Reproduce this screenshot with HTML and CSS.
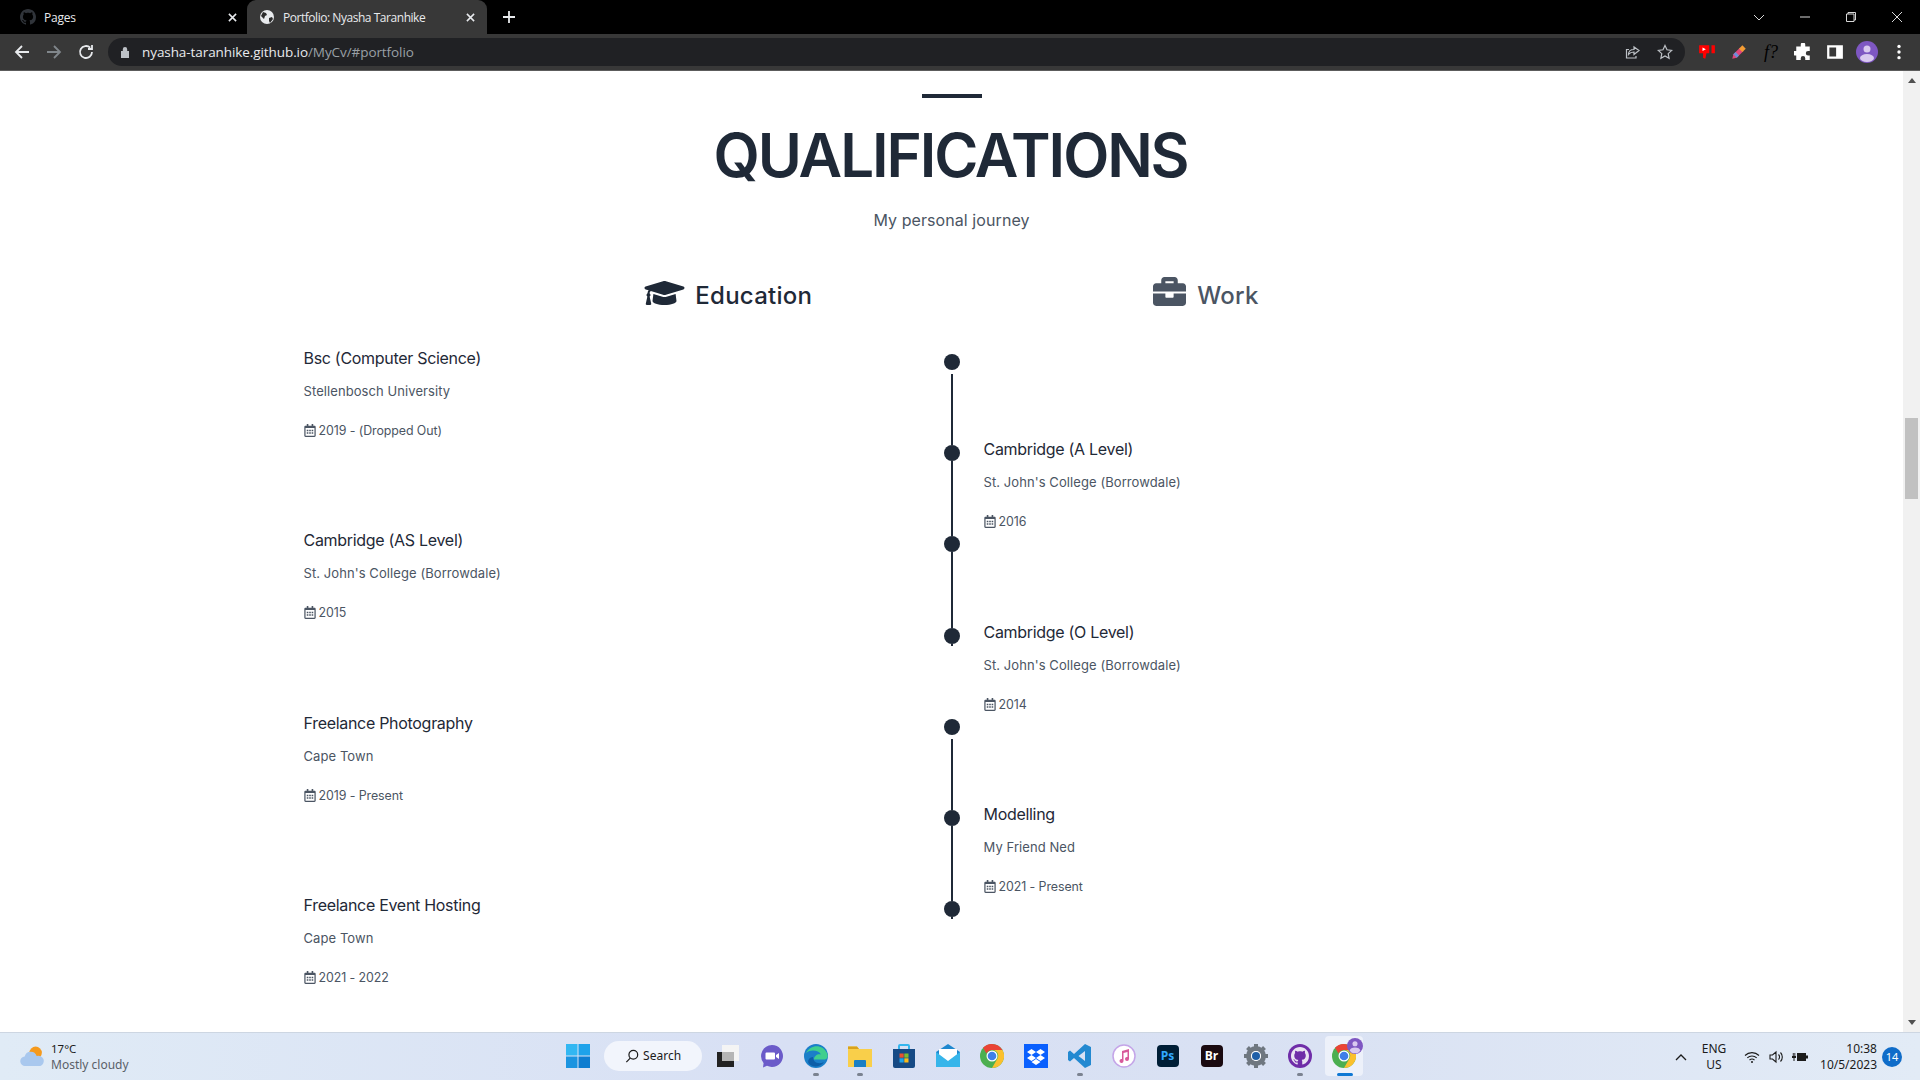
FILE: index.html
```html
<!DOCTYPE html>
<html lang="en">
<head>
<meta charset="utf-8">
<title>Portfolio: Nyasha Taranhike</title>
<link rel="stylesheet" href="styles.css">
</head>
<body>
<svg class="defs" width="0" height="0">
  <symbol id="cal" viewBox="0 0 448 512"><path d="M148 288h-40c-6.600 0-12-5.400-12-12v-40c0-6.600 5.400-12 12-12h40c6.600 0 12 5.400 12 12v40c0 6.600-5.400 12-12 12zm108-12v-40c0-6.600-5.400-12-12-12h-40c-6.600 0-12 5.400-12 12v40c0 6.600 5.400 12 12 12h40c6.600 0 12-5.400 12-12zm96 0v-40c0-6.600-5.400-12-12-12h-40c-6.600 0-12 5.400-12 12v40c0 6.600 5.400 12 12 12h40c6.600 0 12-5.400 12-12zm-96 96v-40c0-6.600-5.400-12-12-12h-40c-6.600 0-12 5.400-12 12v40c0 6.600 5.400 12 12 12h40c6.600 0 12-5.400 12-12zm-96 0v-40c0-6.600-5.400-12-12-12h-40c-6.600 0-12 5.400-12 12v40c0 6.600 5.400 12 12 12h40c6.600 0 12-5.400 12-12zm192 0v-40c0-6.600-5.400-12-12-12h-40c-6.600 0-12 5.400-12 12v40c0 6.600 5.400 12 12 12h40c6.600 0 12-5.400 12-12zm96-260v352c0 26.500-21.500 48-48 48H48c-26.500 0-48-21.500-48-48V112c0-26.500 21.500-48 48-48h48V12c0-6.600 5.400-12 12-12h40c6.600 0 12 5.400 12 12v52h128V12c0-6.600 5.400-12 12-12h40c6.600 0 12 5.400 12 12v52h48c26.500 0 48 21.500 48 48zm-48 346V160H48v298c0 3.300 2.700 6 6 6h340c3.300 0 6-2.700 6-6z"/></symbol>
  <symbol id="gh" viewBox="0 0 16 16"><path d="M8 0C3.580 0 0 3.580 0 8c0 3.540 2.290 6.530 5.470 7.590.4.070.55-.17.55-.38 0-.19-.01-.82-.01-1.490-2.010.37-2.530-.49-2.690-.94-.09-.23-.48-.94-.82-1.130-.28-.15-.68-.52-.01-.53.63-.01 1.080.58 1.230.82.72 1.210 1.870.87 2.330.66.07-.52.28-.87.51-1.070-1.780-.2-3.640-.89-3.640-3.950 0-.87.31-1.590.82-2.150-.08-.2-.36-1.020.08-2.120 0 0 .67-.21 2.200.82.64-.18 1.320-.27 2-.27.68 0 1.360.09 2 .27 1.530-1.040 2.200-.82 2.200-.82.44 1.100.16 1.920.08 2.120.51.56.82 1.270.82 2.150 0 3.070-1.870 3.750-3.650 3.950.29.25.54.73.54 1.480 0 1.070-.01 1.930-.01 2.200 0 .21.15.46.55.38A8.013 8.013 0 0016 8c0-4.420-3.580-8-8-8z"/></symbol>
  <symbol id="chrome" viewBox="0 0 24 24">
    <circle cx="12" cy="12" r="12" fill="#4caf50"/>
    <path d="M12 0a12 12 0 0 1 10.400 6H12a6 6 0 0 0-5.500 3.600L3 3.800A12 12 0 0 1 12 0z" fill="#ea4335"/>
    <path d="M22.400 6A12 12 0 0 1 12 24l5.200-9A6 6 0 0 0 17 8.300 6 6 0 0 0 12 6z" fill="#fbc02d"/>
    <circle cx="12" cy="12" r="5.500" fill="#fff"/><circle cx="12" cy="12" r="4.300" fill="#3f7fe8"/>
  </symbol>
</svg>

<div class="tabstrip">
  <div class="tab">
    <svg class="favicon" viewBox="0 0 16 16" fill="#30343a"><use href="#gh"/></svg>
    <span class="tab-title">Pages</span>
    <svg class="tab-close" viewBox="0 0 10 10"><path d="M1 1l8 8M9 1l-8 8"/></svg>
  </div>
  <div class="tab tab-active">
    <svg class="favicon" viewBox="0 0 16 16"><circle cx="8" cy="8" r="7" fill="#e8eaed"/><path d="M4 3l3 1 1 2-2 1-1 3-3-3zM10 9l3-1 1 2-3 4-1-2z" fill="#2b2b2b"/></svg>
    <span class="tab-title">Portfolio: Nyasha Taranhike</span>
    <svg class="tab-close" viewBox="0 0 10 10"><path d="M1 1l8 8M9 1l-8 8"/></svg>
  </div>
  <svg class="newtab" viewBox="0 0 12 12"><path d="M6 0v12M0 6h12"/></svg>
  <div class="winctrls">
    <svg class="win" viewBox="0 0 12 12"><path d="M1 4l5 5 5-5"/></svg>
    <svg class="win" viewBox="0 0 12 12"><path d="M1 6h10"/></svg>
    <svg class="win" viewBox="0 0 12 12"><path d="M3 3V1.500h7.500V9H9M1.500 3h7.500v7.500H1.500z"/></svg>
    <svg class="win" viewBox="0 0 12 12"><path d="M1 1l10 10M11 1L1 11"/></svg>
  </div>
</div>

<div class="toolbar">
  <svg class="nav nav-first" viewBox="0 0 16 16"><path d="M15 8H2M8 2L2 8l6 6"/></svg>
  <svg class="nav nav-dim" viewBox="0 0 16 16"><path d="M1 8h13M8 2l6 6-6 6"/></svg>
  <svg class="nav" viewBox="0 0 16 16"><path d="M14 8a6 6 0 1 1-1.800-4.300M14 1v4h-4"/></svg>
  <div class="omnibox">
    <svg class="lock" viewBox="0 0 10 12"><path d="M1 5h8v7H1zM2.800 5V3.200a2.200 2.200 0 0 1 4.400 0V5" fill="#bdc1c6"/></svg>
    <span class="url"><span class="url-host">nyasha-taranhike.github.io</span>/MyCv/#portfolio</span>
    <svg class="omni-icon omni-share" viewBox="0 0 16 16"><path d="M9 3v2.500C5 5.500 3.500 8 3.500 10.500 5 8.500 7 8 9 8v2.500L14 6.500zM11 12v2H1.500V5.500H4"/></svg>
    <svg class="omni-icon" viewBox="0 0 16 16"><path d="M8 1.500l2 4.300 4.700.6-3.500 3.200.9 4.700L8 11.900l-4.100 2.400.9-4.700L1.300 6.400 6 5.800z"/></svg>
  </div>
  <div class="extensions">
    <svg class="ext" viewBox="0 0 16 16"><path d="M1 2h9v7H7.500l-1 5-2-1V9H1zM12 2h3v7h-3z" fill="#f00"/><path d="M4 4l3 1.500L4 7z" fill="#fff"/></svg>
    <svg class="ext" viewBox="0 0 16 16"><path d="M2 14l1-4 6-6 3 3-6 6z" fill="#e0457b"/><path d="M8 5l3-3 3 3-3 3z" fill="#f39c34"/><path d="M5 8l3 3-2 2-3-3z" fill="#6d8fd8"/></svg>
    <span class="ext ext-font">f?</span>
    <svg class="ext" viewBox="0 0 16 16"><path d="M6 1.500a2 2 0 0 1 4 0V3h4v4h-1.500a2 2 0 0 0 0 4H14v4h-4v-1.500a2 2 0 0 0-4 0V15H2v-4H.5a2 2 0 0 1 0-4H2V3h4z" fill="#fff"/></svg>
    <svg class="ext" viewBox="0 0 16 16"><path d="M1 2h14v12H1zM3 4v8h6V4z" fill="#fff"/></svg>
    <svg class="ext ext-avatar" viewBox="0 0 22 22"><circle cx="11" cy="11" r="11" fill="#7e57c2"/><circle cx="11" cy="8" r="3.500" fill="#d9c9ef"/><ellipse cx="11" cy="17" rx="7" ry="4" fill="#d9c9ef"/></svg>
    <svg class="ext" viewBox="0 0 16 16"><circle cx="8" cy="3" r="1.500" fill="#fff"/><circle cx="8" cy="8" r="1.500" fill="#fff"/><circle cx="8" cy="13" r="1.500" fill="#fff"/></svg>
  </div>
</div>

<div class="viewport">
  <main class="page">
    <div class="rule"></div>
    <h1 class="heading">QUALIFICATIONS</h1>
    <p class="subheading">My personal journey</p>

    <div class="switch">
      <div class="switch-item">
        <svg class="switch-icon switch-cap" viewBox="0 0 640 512"><path d="M622.340 153.200L343.400 67.500c-15.200-4.670-31.600-4.670-46.790 0L17.660 153.200c-23.540 7.230-23.540 38.360 0 45.590l48.630 14.940c-10.670 13.190-17.230 29.280-17.880 46.900C38.780 266.150 32 276.110 32 288c0 10.780 5.680 19.850 13.860 25.650L20.330 428.530C18.110 438.520 25.710 448 35.940 448h56.110c10.240 0 17.840-9.480 15.620-19.470L82.140 313.650C90.320 307.850 96 298.780 96 288c0-11.570-6.470-21.250-15.660-26.870.76-15.020 8.440-28.300 20.690-36.720L296.600 284.500c9.060 2.780 26.440 6.250 46.790 0l278.950-85.700c23.550-7.240 23.550-38.360 0-45.600zM352.790 315.090c-28.530 8.760-52.840 3.920-65.590 0l-145.020-44.550L128 384c0 35.350 85.960 64 192 64s192-28.650 192-64l-14.180-113.470-145.030 44.560z"/></svg>
        <span>Education</span>
      </div>
      <div class="switch-item switch-muted">
        <svg class="switch-icon switch-case" viewBox="0 0 512 512"><path d="M320 336c0 8.840-7.160 16-16 16h-96c-8.840 0-16-7.160-16-16v-48H0v144c0 25.600 22.400 48 48 48h416c25.600 0 48-22.400 48-48V288H320v48zm144-208h-80V80c0-25.600-22.400-48-48-48H176c-25.600 0-48 22.400-48 48v48H48c-25.600 0-48 22.400-48 48v80h512v-80c0-25.600-22.400-48-48-48zm-144 0H192V96h128v32z"/></svg>
        <span>Work</span>
      </div>
    </div>

    <div class="timeline">
      <div class="row">
        <div class="item"><h3>Bsc (Computer Science)</h3><p class="place">Stellenbosch University</p><p class="date"><svg class="cal"><use href="#cal"/></svg>2019 - (Dropped Out)</p></div>
        <div class="rail rail-gap"><span class="dot"></span><span class="line"></span></div>
        <div></div>
      </div>
      <div class="row">
        <div></div>
        <div class="rail"><span class="dot"></span><span class="line"></span></div>
        <div class="item"><h3>Cambridge (A Level)</h3><p class="place">St. John's College (Borrowdale)</p><p class="date"><svg class="cal"><use href="#cal"/></svg>2016</p></div>
      </div>
      <div class="row">
        <div class="item"><h3>Cambridge (AS Level)</h3><p class="place">St. John's College (Borrowdale)</p><p class="date"><svg class="cal"><use href="#cal"/></svg>2015</p></div>
        <div class="rail"><span class="dot"></span><span class="line"></span></div>
        <div></div>
      </div>
      <div class="row">
        <div></div>
        <div class="rail rail-end"><span class="dot"></span><span class="line"></span></div>
        <div class="item"><h3>Cambridge (O Level)</h3><p class="place">St. John's College (Borrowdale)</p><p class="date"><svg class="cal"><use href="#cal"/></svg>2014</p></div>
      </div>
      <div class="row">
        <div class="item"><h3>Freelance Photography</h3><p class="place">Cape Town</p><p class="date"><svg class="cal"><use href="#cal"/></svg>2019 - Present</p></div>
        <div class="rail rail-gap"><span class="dot"></span><span class="line"></span></div>
        <div></div>
      </div>
      <div class="row">
        <div></div>
        <div class="rail"><span class="dot"></span><span class="line"></span></div>
        <div class="item"><h3>Modelling</h3><p class="place">My Friend Ned</p><p class="date"><svg class="cal"><use href="#cal"/></svg>2021 - Present</p></div>
      </div>
      <div class="row">
        <div class="item"><h3>Freelance Event Hosting</h3><p class="place">Cape Town</p><p class="date"><svg class="cal"><use href="#cal"/></svg>2021 - 2022</p></div>
        <div class="rail rail-end"><span class="dot"></span><span class="line"></span></div>
        <div></div>
      </div>
    </div>
  </main>
  <div class="scrollbar">
    <svg class="arrow" viewBox="0 0 8 5"><path d="M4 0l4 5H0z"/></svg>
    <div class="track"><div class="thumb"></div></div>
    <svg class="arrow" viewBox="0 0 8 5"><path d="M4 5L0 0h8z"/></svg>
  </div>
</div>

<footer class="taskbar">
  <div class="weather">
    <svg class="weather-icon" viewBox="0 0 24 20"><circle cx="15" cy="6.500" r="6" fill="#f59a1d"/><path d="M5 19a4.500 4.500 0 0 1-.5-9A6 6 0 0 1 16 9.500a4.700 4.700 0 0 1 3.500 9.500z" fill="#a9c8ee"/></svg>
    <div class="weather-text"><span class="temp">17°C</span><span class="cond">Mostly cloudy</span></div>
  </div>
  <div class="dock">
    <div class="app"><svg class="ico" viewBox="0 0 24 24"><path d="M0 0h11.500v11.500H0z" fill="#32b7f2"/><path d="M12.500 0H24v11.500H12.500z" fill="#1ea2ea"/><path d="M0 12.500h11.500V24H0z" fill="#1b94e0"/><path d="M12.500 12.500H24V24H12.500z" fill="#0f7dd0"/></svg></div>
    <div class="search"><svg class="search-ico" viewBox="0 0 16 16"><circle cx="9.500" cy="6.500" r="5"/><path d="M6 10.500L1.500 15"/></svg><span>Search</span></div>
    <div class="app"><svg class="ico" viewBox="0 0 24 24"><path d="M6 1h17v16H6z" fill="#f4f4f4"/><path d="M1 8h17v15H1z" fill="#222"/><path d="M6 8h12v9H6z" fill="#b5b5b5"/></svg></div>
    <div class="app"><svg class="ico" viewBox="0 0 24 24"><path d="M12 1a11 11 0 1 1-5 20.800L3 23.500l.6-4.600A11 11 0 0 1 12 1z" fill="#6b5bc9"/><path d="M6.500 8.500h7.500a1 1 0 0 1 1 1v5a1 1 0 0 1-1 1H6.500a1 1 0 0 1-1-1v-5a1 1 0 0 1 1-1zM16 11l3-2v6l-3-2z" fill="#fff"/></svg></div>
    <div class="app app-open"><svg class="ico" viewBox="0 0 24 24"><circle cx="12" cy="12" r="12" fill="#1b7fc9"/><path d="M2 9C6 1 18-1 23 9c1.500 3 .5 6-2 6.500H10c0-4 4-6 7-5C15 6 6 5 2 9z" fill="#3fcf8e"/><path d="M9 13c0 5 5 8 11 5-3 5-11 6-15 2C3 17 5 13 9 13z" fill="#0d5ea8"/></svg><i class="pip"></i></div>
    <div class="app app-open"><svg class="ico" viewBox="0 0 24 24"><path d="M0 2.500h9l2 2.500h13v18H0z" fill="#f9cf4a"/><path d="M0 2.500h9l2 2.500H0z" fill="#d9a21b"/><path d="M7 16h10a1 1 0 0 1 1 1v6H6v-6a1 1 0 0 1 1-1z" fill="#1a7fc4"/></svg><i class="pip"></i></div>
    <div class="app"><svg class="ico" viewBox="0 0 24 24"><path d="M7 5V2a1 1 0 0 1 1-1h8a1 1 0 0 1 1 1v3" fill="none" stroke="#35b6ee" stroke-width="2"/><path d="M1 5h22v17a2 2 0 0 1-2 2H3a2 2 0 0 1-2-2z" fill="#164a85"/><path d="M7.500 9.500h4.200v4.200H7.500z" fill="#e8512f"/><path d="M12.300 9.500h4.200v4.200h-4.200z" fill="#7fba2c"/><path d="M7.500 14.300h4.200v4.200H7.500z" fill="#1ca4ea"/><path d="M12.300 14.300h4.200v4.200h-4.200z" fill="#fbbb1a"/></svg></div>
    <div class="app"><svg class="ico" viewBox="0 0 24 24"><path d="M0 8l12-8 12 8v15H0z" fill="#1f88cf"/><path d="M3 5h18v12H3z" fill="#fff"/><path d="M0 8l12 9 12-9v15H0z" fill="#36b5ea"/></svg></div>
    <div class="app"><svg class="ico"><use href="#chrome"/></svg></div>
    <div class="app"><svg class="ico" viewBox="0 0 24 24"><path d="M0 0h24v24H0z" fill="#0a60fe"/><path d="M7.500 5L12 8 7.500 11 3 8zM16.500 5L21 8l-4.500 3L12 8zM7.500 11L12 14l-4.500 3L3 14zM16.500 11L21 14l-4.500 3L12 14zM7.500 18l4.500-3 4.500 3L12 21z" fill="#fff"/></svg></div>
    <div class="app app-open"><svg class="ico" viewBox="0 0 24 24"><path d="M17 0l6 3v18l-6 3L6 14l-4 3.500L0 16v-8l2-1.500L6 10zM17 7l-6.500 5 6.500 5z" fill="#2389d1"/></svg><i class="pip"></i></div>
    <div class="app"><svg class="ico" viewBox="0 0 24 24"><circle cx="12" cy="12" r="11" fill="#fff" stroke="#c4a5e8" stroke-width="1.500"/><path d="M10 7l7-2v10a2 2 0 1 1-1.500-2V8l-4 1v8a2 2 0 1 1-1.500-2z" fill="#d85a9a"/></svg></div>
    <div class="app"><span class="badge-app badge-ps">Ps</span></div>
    <div class="app"><span class="badge-app badge-br">Br</span></div>
    <div class="app"><svg class="ico" viewBox="0 0 24 24"><circle cx="12" cy="12" r="7.500" fill="none" stroke="#6f7780" stroke-width="5"/><path d="M12 0v5M12 19v5M0 12h5M19 12h5M3.500 3.500l3.500 3.500M17 17l3.500 3.500M3.500 20.500L7 17M17 7l3.500-3.500" stroke="#6f7780" stroke-width="4"/><circle cx="12" cy="12" r="5" fill="#fff"/><circle cx="12" cy="12" r="4" fill="#1f5fa8"/></svg></div>
    <div class="app app-open"><svg class="ico" viewBox="0 0 24 24"><circle cx="12" cy="12" r="12" fill="#6f2da8"/><svg x="3" y="3" width="18" height="18" fill="#e9e3f2"><use href="#gh"/></svg></svg><i class="pip"></i></div>
    <div class="app app-active"><svg class="ico" viewBox="0 0 24 24"><use href="#chrome"/></svg><svg class="app-avatar" viewBox="0 0 22 22"><circle cx="11" cy="11" r="11" fill="#7e57c2"/><circle cx="11" cy="8" r="3.500" fill="#d9c9ef"/><ellipse cx="11" cy="17" rx="7" ry="4" fill="#d9c9ef"/></svg><i class="pip pip-active"></i></div>
  </div>
  <div class="tray">
    <svg class="tray-chev" viewBox="0 0 12 8"><path d="M1 7l5-5 5 5"/></svg>
    <div class="lang"><span>ENG</span><span>US</span></div>
    <svg class="tray-ico" viewBox="0 0 16 16"><path d="M1 6.500a10 10 0 0 1 14 0M3.300 8.800a7 7 0 0 1 9.400 0M5.500 11a4 4 0 0 1 5 0"/><circle cx="8" cy="13" r="1" fill="#1b1b1b" stroke="none"/></svg>
    <svg class="tray-ico" viewBox="0 0 16 16"><path d="M2 6h2.500L8 3v10l-3.500-3H2zM10.500 5.500a3.500 3.500 0 0 1 0 5M12.500 3.500a6.500 6.500 0 0 1 0 9"/></svg>
    <svg class="tray-ico tray-batt" viewBox="0 0 16 16"><path d="M5 4h9v8H5zM14 6.500h2v3h-2zM0 7h4v2H2.500v3h-1V9H0zM.8 4h.9v3H.8zM2.400 4h.9v3h-.9z"/></svg>
    <div class="clock"><span>10:38</span><span>10/5/2023</span></div>
    <span class="notif">14</span>
  </div>
</footer>
</body>
</html>
```
FILE: styles.css
```css
* { box-sizing: border-box; }
html, body { margin: 0; height: 100%; }
body {
  width: 1920px;
  height: 1080px;
  overflow: hidden;
  display: flex;
  flex-direction: column;
  background: #fff;
  font-family: Inter, "Open Sans", sans-serif;
}
.defs { display: block; height: 0; }

/* Tab strip */
.tabstrip {
  height: 34px;
  flex: none;
  display: flex;
  align-items: stretch;
  background: #000;
  color: #e8eaed;
  font: 12px "Open Sans", sans-serif;
}
.tab {
  width: 239px;
  margin-right: 8px;
  display: flex;
  align-items: center;
  padding: 0 0 0 20px;
}
.tab-active {
  width: 240px;
  margin-right: 0;
  padding: 0 10px 0 12px;
  background: #383838;
  border-radius: 9px 9px 0 0;
}
.favicon { width: 16px; height: 16px; flex: none; margin-right: 8px; }
.tab-title { flex: 1; white-space: nowrap; overflow: hidden; letter-spacing: -.2px; }
.tab-active .tab-title { letter-spacing: -.46px; }
.tab-close { width: 9px; height: 9px; flex: none; margin-right: 2px; }
.tab-close path { stroke: #e8eaed; stroke-width: 1.700; fill: none; }
.newtab { width: 12px; height: 12px; align-self: center; margin-left: 16px; }
.newtab path { stroke: #e8eaed; stroke-width: 1.800; fill: none; }
.winctrls { margin-left: auto; display: flex; align-items: center; padding-right: 17px; gap: 34px; }
.win { width: 12px; height: 12px; }
.win path { stroke: #d8d8d8; stroke-width: 1; fill: none; }

/* Toolbar */
.toolbar {
  height: 37px;
  flex: none;
  display: flex;
  align-items: center;
  background: #383838;
  border-bottom: 1px solid #5c5c5c;
}
.nav { width: 16px; height: 16px; margin-right: 16px; flex: none; }
.nav path { stroke: #e8eaed; stroke-width: 1.800; fill: none; }
.nav-first { margin-left: 14px; }
.nav-dim path { stroke: #80868b; }
.omnibox {
  width: 1577px;
  height: 28px;
  margin-left: -2px;
  flex: none;
  display: flex;
  align-items: center;
  padding: 0 12px 0 12px;
  border-radius: 14px;
  background: #202124;
  color: #9aa0a6;
  font: 13.500px "Open Sans", sans-serif;
}
.lock { width: 10px; height: 12px; margin-right: 12px; flex: none; }
.url { flex: 1; letter-spacing: -.08px; white-space: nowrap; }
.url-host { color: #e8eaed; }
.omni-icon { width: 16px; height: 16px; flex: none; margin-left: 16px; }
.omni-share { margin-right: 0; }
.omni-icon path { stroke: #bdc1c6; stroke-width: 1.200; fill: none; }
.extensions { display: flex; align-items: center; gap: 14px; margin-left: 13px; }
.ext { width: 18px; height: 18px; flex: none; display: block; }
.ext-font { font: italic 18px/18px "Liberation Serif", serif; color: #000; text-align: center; }
.ext-avatar { width: 22px; height: 22px; margin: 0 -2px; }

/* Page */
.viewport { flex: 1; min-height: 0; display: flex; }
.page { flex: 1; min-width: 0; overflow: hidden; color: #1f2937; }
.rule { width: 60px; height: 4px; margin: 23px auto 0; background: #1f2937; }
.heading {
  margin: 27px 0 0;
  padding-right: 2px;
  text-align: center;
  font-size: 60px;
  line-height: 60px;
  font-weight: 600;
  letter-spacing: -2.100px;
}
.subheading { margin: 23px 0 0; text-align: center; font-size: 16px; line-height: 24px; letter-spacing: .08px; color: #4b5563; }
.switch { margin-top: 45px; height: 36px; display: flex; justify-content: center; gap: 341px; }
.switch-item { display: flex; align-items: center; font-size: 24px; font-weight: 500; letter-spacing: .25px; }
.switch-muted { color: #4b5563; }
.switch-icon { fill: currentColor; flex: none; display: block; }
.switch-cap { width: 41px; height: 32px; margin-right: 10px; margin-top: -4px; }
.switch-case { width: 33px; height: 33px; margin-right: 11px; margin-top: -7px; }
.timeline { width: 1296px; margin: 41px auto 0; }
.row { height: 91.200px; display: grid; grid-template-columns: 1fr 16px 1fr; column-gap: 24px; }
.item { margin-top: -8px; }
.item h3 { margin: 0; font-size: 16px; line-height: 24px; font-weight: 400; letter-spacing: -.3px; white-space: nowrap; }
.place { margin: 11px 0 0; font-size: 13px; line-height: 20px; letter-spacing: .08px; color: #4b5563; }
.date { margin: 20px 0 0; font-size: 12.400px; line-height: 20px; letter-spacing: -.08px; color: #4b5563; display: flex; align-items: center; }
.cal { width: 12px; height: 13px; margin: -1px 3px 0 0; fill: #4b5563; flex: none; }
.rail { display: flex; flex-direction: column; align-items: center; }
.dot { width: 16px; height: 16px; flex: none; border-radius: 50%; background: #1f2937; }
.line { flex: 1; width: 2px; background: #1f2937; }
.rail-gap .line { margin-top: 4px; }
.rail-end .line { flex: none; height: 2px; }

/* Scrollbar */
.scrollbar { width: 17px; flex: none; background: #f1f1f1; display: flex; flex-direction: column; align-items: center; padding: 7px 0; }
.arrow { width: 8px; height: 5px; flex: none; fill: #505050; }
.track { flex: 1; width: 100%; padding: 0 2px; }
.thumb { height: 81px; margin-top: 335px; background: #c1c1c1; }

/* Taskbar */
.taskbar {
  height: 48px;
  flex: none;
  display: grid;
  grid-template-columns: 1fr auto 1fr;
  align-items: center;
  background: linear-gradient(90deg, #e0ebf6 0%, #d8e0f4 40%, #d9e1f3 65%, #e2ebf6 100%);
  border-top: 1px solid #cdd6e2;
  color: #1b1b1b;
  font: 12px "Noto Sans", sans-serif;
}
.weather { display: flex; align-items: center; padding-left: 20px; }
.weather-icon { width: 25px; height: 21px; margin-right: 6px; flex: none; }
.weather-text { display: flex; flex-direction: column; line-height: 16px; }
.temp { font-size: 11.500px; }
.cond { color: #5a6068; }
.dock { display: flex; align-items: center; height: 100%; padding: 0 1.400px 2px 0; }
.app { position: relative; width: 44px; height: 40px; display: flex; align-items: center; justify-content: center; flex: none; }
.ico { width: 24px; height: 24px; display: block; }
.pip { position: absolute; left: 19px; bottom: 0; width: 6px; height: 3px; border-radius: 2px; background: #7b8290; }
.pip-active { left: 12px; width: 16px; background: #0f78d4; }
.app-active { width: 38px; margin-left: 3px; background: #edf1fa; border-radius: 4px; }
.app-avatar { position: absolute; right: 0; top: 2px; width: 16px; height: 16px; }
.search {
  width: 98px;
  height: 30px;
  margin: 0 3.400px 0 4px;
  flex: none;
  display: flex;
  align-items: center;
  justify-content: center;
  gap: 4px;
  border-radius: 15px;
  background: #f2f5fc;
  font-size: 12px;
}
.search-ico { width: 14px; height: 14px; }
.search-ico circle, .search-ico path { fill: none; stroke: #1b1b1b; stroke-width: 1.400; }
.badge-app {
  width: 22px;
  height: 22px;
  border-radius: 4px;
  display: flex;
  align-items: center;
  justify-content: center;
  font: 700 12px "Open Sans", sans-serif;
}
.badge-ps { background: #001e36; color: #31a8ff; }
.badge-br { background: #1a0a10; color: #fff; }
.tray { display: flex; align-items: center; justify-content: flex-end; padding-right: 18px; }
.tray-chev { width: 12px; height: 8px; margin-right: 12px; }
.tray-chev path { stroke: #1b1b1b; stroke-width: 1.300; fill: none; }
.lang { width: 30px; display: flex; flex-direction: column; align-items: center; line-height: 16px; margin-right: 15px; }
.tray-ico { width: 16px; height: 16px; margin-right: 8px; flex: none; }
.tray-ico path { stroke: #1b1b1b; stroke-width: 1.100; fill: none; }
.tray-batt path { fill: #1b1b1b; stroke: none; }
.clock { width: 62px; margin-left: -1px; display: flex; flex-direction: column; align-items: flex-end; line-height: 16px; white-space: nowrap; }
.notif {
  width: 20px;
  height: 20px;
  margin-left: 5px;
  border-radius: 50%;
  background: #0f6cc9;
  color: #fff;
  font-size: 11px;
  line-height: 20px;
  text-align: center;
}
```
